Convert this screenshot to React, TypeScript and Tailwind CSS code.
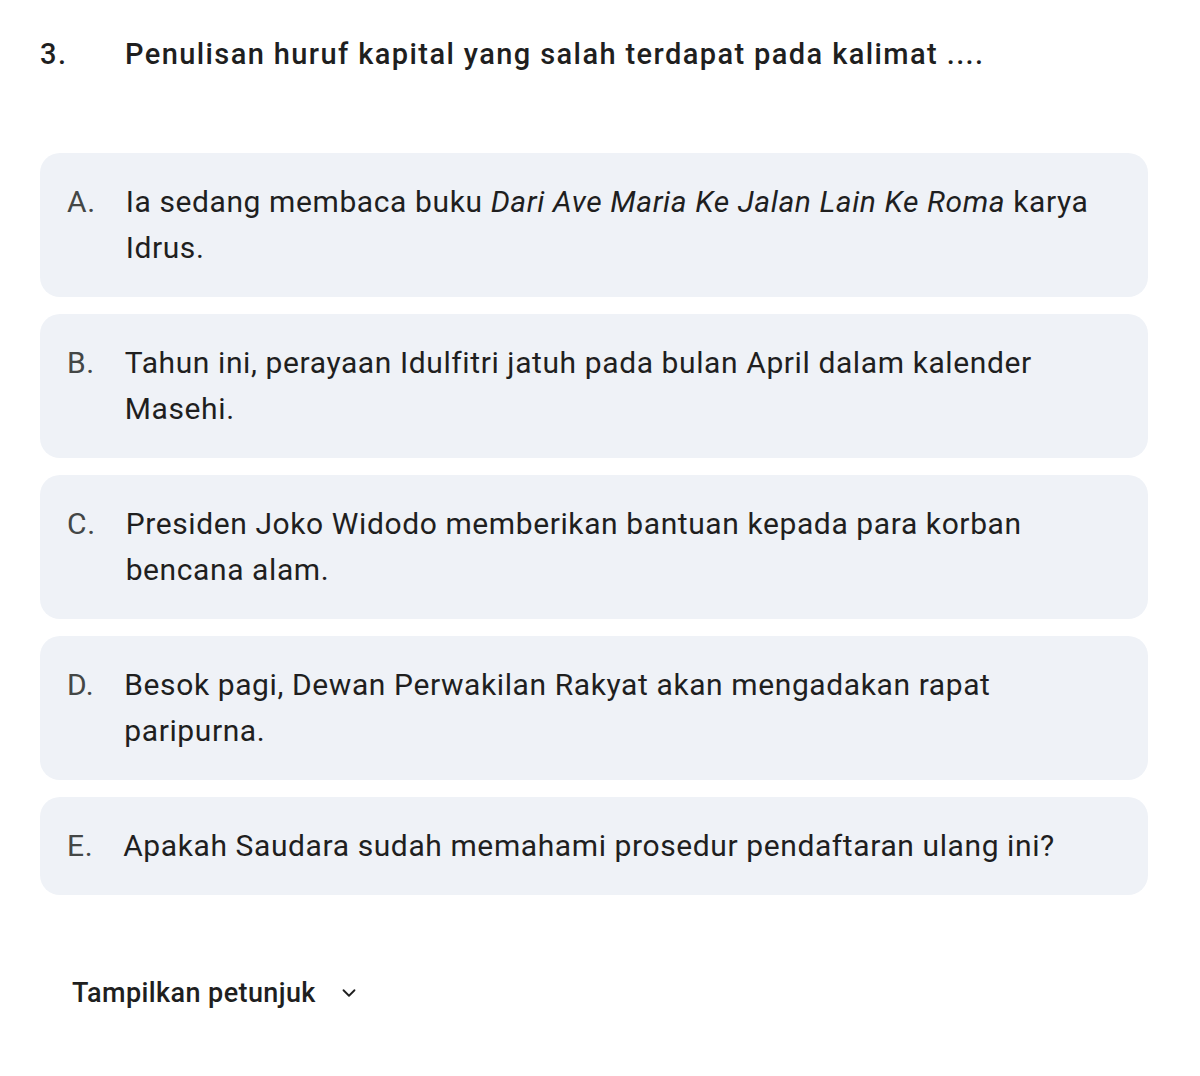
import React from "react";

const options: { l: string; t: React.ReactNode }[] = [
  {
    l: "A.",
    t: (
      <>
        Ia sedang membaca buku <i>Dari Ave Maria Ke Jalan Lain Ke Roma</i> karya Idrus.
      </>
    ),
  },
  { l: "B.", t: "Tahun ini, perayaan Idulfitri jatuh pada bulan April dalam kalender Masehi." },
  { l: "C.", t: "Presiden Joko Widodo memberikan bantuan kepada para korban bencana alam." },
  { l: "D.", t: "Besok pagi, Dewan Perwakilan Rakyat akan mengadakan rapat paripurna." },
  { l: "E.", t: "Apakah Saudara sudah memahami prosedur pendaftaran ulang ini?" },
];

export default function App() {
  return (
    <div
      className="w-[1200px] h-[1076px] bg-white text-[#1f1f1f] pt-[34px] px-[40px]"
      style={{ fontFamily: "Roboto, 'Noto Sans', sans-serif" }}
    >
      <div className="flex items-center text-[29px] leading-[40px] font-medium tracking-[1.4px]">
        <span className="w-[85px]">3.</span>
        <span>Penulisan huruf kapital yang salah terdapat pada kalimat ....</span>
      </div>
      <div className="mt-[79px] w-[1108px] flex flex-col gap-[17px]">
        {options.map((o) => (
          <div key={o.l} className="bg-[#eff2f7] rounded-[20px] pl-[27px] pr-[28px] py-[26px] flex text-[30px] leading-[46px] tracking-[0.6px]">
            <span className="text-[#444746] shrink-0 mr-[30px]">{o.l}</span>
            <span>{o.t}</span>
          </div>
        ))}
      </div>
      <div className="mt-[80px] ml-[32px] flex items-center text-[27px] leading-[36px] font-medium tracking-[0.4px]">
        <span>Tampilkan petunjuk</span>
        <svg className="ml-[22px]" width="22" height="22" viewBox="0 0 24 24" fill="none" stroke="#1f1f1f" strokeWidth="2" strokeLinecap="round" strokeLinejoin="round">
          <path d="M6 9l6 6 6-6" />
        </svg>
      </div>
    </div>
  );
}
